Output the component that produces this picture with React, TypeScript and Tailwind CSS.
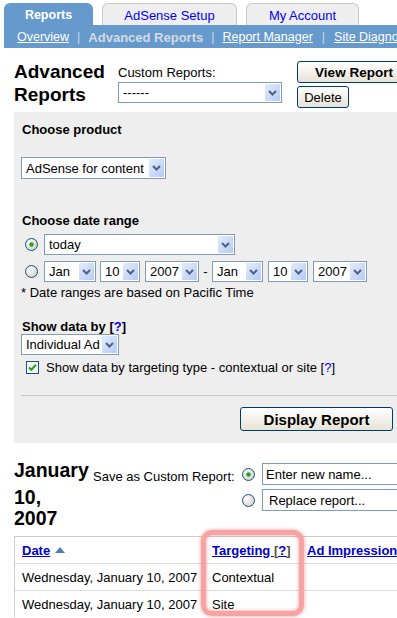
import React from 'react';

// Old AdSense "Advanced Reports" page
function Chevron() {
  return (
    <svg width="9" height="6" viewBox="0 0 9 6">
      <path d="M1 1 L4.5 4.5 L8 1" stroke="#4d6185" strokeWidth="2" fill="none" />
    </svg>
  );
}

function Select({ className, children }: { className: string; children?: React.ReactNode }) {
  return (
    <div className={`flex shrink-0 border border-[#7f9db9] bg-white ${className}`}>
      <span className="flex flex-1 items-center overflow-hidden whitespace-nowrap pl-[4px]">{children}</span>
      <span className="m-px flex w-[15px] items-center justify-center bg-gradient-to-br from-[#e4ecfd] to-[#b6caf6]">
        <Chevron />
      </span>
    </div>
  );
}

function Radio({ checked }: { checked?: boolean }) {
  return (
    <svg width="13" height="13" viewBox="0 0 13 13" className="shrink-0">
      <defs>
        <radialGradient id="radioFill" cx="35%" cy="35%" r="75%">
          <stop offset="0" stopColor="#ffffff" />
          <stop offset="1" stopColor="#cfcdc4" />
        </radialGradient>
      </defs>
      <circle cx="6.5" cy="6.5" r="6" fill="url(#radioFill)" stroke="#1c5180" strokeWidth="1" />
      {checked && <circle cx="6.5" cy="6.5" r="2.2" fill="#21a121" />}
    </svg>
  );
}

function Checkbox() {
  return (
    <svg width="13" height="13" viewBox="0 0 13 13" className="shrink-0">
      <rect x="0.5" y="0.5" width="12" height="12" fill="#f6f6f3" stroke="#1c5180" />
      <path d="M3 6.5 L5.3 8.8 L10 3.8" stroke="#21a121" strokeWidth="2" fill="none" />
    </svg>
  );
}

function Help({ bold }: { bold?: boolean }) {
  return (
    <span className={bold ? 'font-bold' : ''}>
      [<span className="text-[#0000ff]">?</span>]
    </span>
  );
}

export default function App() {
  const rows = [
    { date: 'Wednesday, January 10, 2007', targeting: 'Contextual' },
    { date: 'Wednesday, January 10, 2007', targeting: 'Site' },
  ];

  return (
    <div className="h-[618px] w-[397px] overflow-hidden bg-white font-['Liberation_Sans',Arial,sans-serif] text-[13px] leading-[15px] text-black">
      {/* tabs */}
      <div className="flex whitespace-nowrap pl-[4px] pt-[3px]">
        <div className="flex h-[22px] w-[89px] shrink-0 items-end justify-center rounded-t-[6px] bg-[#6699cc] pb-[2px] text-[12.5px] font-bold text-white">
          Reports
        </div>
        <div className="ml-[9px] flex h-[22px] w-[135px] shrink-0 items-end justify-center rounded-t-[6px] border border-b-0 border-[#c8c8c8] bg-[#eeeeee] pb-[2px] text-[#0000ff]">
          AdSense Setup
        </div>
        <div className="ml-[9px] flex h-[22px] w-[113px] shrink-0 items-end justify-center rounded-t-[6px] border border-b-0 border-[#c8c8c8] bg-[#eeeeee] pb-[2px] text-[#0000ff]">
          My Account
        </div>
      </div>
      <div className="ml-[4px] flex h-[23px] items-center whitespace-nowrap bg-[#6699cc] pl-[13px] pt-px text-[12.5px] text-white">
        <a className="shrink-0 underline">Overview</a>
        <span className="mx-[8px] shrink-0 text-[#c9d7e6]">|</span>
        <span className="shrink-0 text-[13px] font-bold text-[#d3dbe4]">Advanced Reports</span>
        <span className="mx-[8px] shrink-0 text-[#c9d7e6]">|</span>
        <a className="shrink-0 underline">Report Manager</a>
        <span className="mx-[9px] shrink-0 text-[#c9d7e6]">|</span>
        <a className="shrink-0 underline">Site Diagnostics</a>
      </div>

      {/* header */}
      <div className="flex h-[64px] whitespace-nowrap">
        <div className="ml-[14px] w-[104px] shrink-0 whitespace-normal pt-[12px] text-[19px] font-bold leading-[23px]">
          Advanced Reports
        </div>
        <div className="w-[179px] shrink-0 pt-[17px]">
          <div>Custom Reports:</div>
          <Select className="mt-[2px] h-[21px] w-[164px]">------</Select>
        </div>
        <div className="flex shrink-0 flex-col items-start gap-[3px] pt-[13px]">
          <button className="h-[22px] w-[114px] rounded-[3px] border border-[#003c74] bg-gradient-to-b from-white to-[#e6e3d6] text-[13.5px] font-bold">
            View Report
          </button>
          <button className="h-[22px] w-[52px] rounded-[3px] border border-[#003c74] bg-gradient-to-b from-white to-[#e6e3d6]">
            Delete
          </button>
        </div>
      </div>

      {/* options panel */}
      <div className="ml-[14px] flex h-[331px] flex-col bg-[#eeeeee] pl-[7px] pt-[10px] whitespace-nowrap">
        <div className="ml-px font-bold">Choose product</div>
        <Select className="mt-[20px] h-[22px] w-[145px]">AdSense for content</Select>

        <div className="ml-px mt-[34px] font-bold">Choose date range</div>
        <div className="mt-[6px] flex h-[21px] items-center">
          <span className="ml-[4px]"><Radio checked /></span>
          <Select className="ml-[6px] h-[21px] w-[191px]">today</Select>
        </div>
        <div className="mt-[6px] flex h-[21px] items-center">
          <span className="ml-[4px]"><Radio /></span>
          <Select className="ml-[6px] h-[21px] w-[52px]">Jan</Select>
          <Select className="ml-[4px] h-[21px] w-[40px]">10</Select>
          <Select className="ml-[5px] h-[21px] w-[54px]">2007</Select>
          <span className="w-[13px] shrink-0 text-center">-</span>
          <Select className="h-[21px] w-[51px]">Jan</Select>
          <Select className="ml-[5px] h-[21px] w-[40px]">10</Select>
          <Select className="ml-[5px] h-[21px] w-[54px]">2007</Select>
        </div>
        <div className="mt-[3px]">* Date ranges are based on Pacific Time</div>

        <div className="ml-px mt-[19px] font-bold">
          Show data by <Help bold />
        </div>
        <Select className="h-[21px] w-[98px]">Individual Ad</Select>
        <div className="mt-[5px] flex h-[15px] items-center">
          <span className="ml-[5px]"><Checkbox /></span>
          <span className="ml-[7px]">
            Show data by targeting type - contextual or site <Help />
          </span>
        </div>

        <div className="mt-[20px] border-t border-[#c8c8c8]" />
        <div className="mt-[11px] flex justify-end pr-[4px]">
          <button className="h-[24px] w-[153px] rounded-[3px] border border-[#003c74] bg-gradient-to-b from-white to-[#e6e3d6] text-[15px] font-bold">
            Display Report
          </button>
        </div>
      </div>

      {/* report heading */}
      <div className="flex whitespace-nowrap pl-[14px] pt-[16px]">
        <div className="w-[79px] shrink-0 text-[19.5px] font-bold">
          <span className="block leading-[22px]">January</span>
          <span className="mt-[6px] block leading-[21px]">10,</span>
          <span className="block leading-[21px]">2007</span>
        </div>
        <div className="w-[149px] shrink-0 pt-[10px]">Save as Custom Report:</div>
        <div className="flex shrink-0 flex-col gap-[4px] pt-[4px]">
          <div className="flex h-[22px] items-center">
            <Radio checked />
            <div className="ml-[7px] flex h-[22px] w-[200px] items-center border border-[#7f9db9] bg-white pl-[3px]">
              Enter new name...
            </div>
          </div>
          <div className="flex h-[22px] items-center">
            <Radio />
            <div className="ml-[7px] flex h-[22px] w-[200px] items-center border border-[#7f9db9] bg-white pl-[6px]">
              Replace report...
            </div>
          </div>
        </div>
      </div>

      {/* results table */}
      <div className="relative ml-[14px] mt-[7px] w-[500px] border-l border-t border-[#cccccc] whitespace-nowrap">
        <div className="grid h-[26px] grid-cols-[190px_95px_1fr] items-center font-bold text-[#0000cc]">
          <div className="flex items-center pl-[7px]">
            <a className="underline">Date</a>
            <svg width="10" height="6" viewBox="0 0 10 6" className="ml-[5px]">
              <path d="M0 6 L5 0 L10 6 Z" fill="#4c7fc0" />
            </svg>
          </div>
          <div className="pl-[7px]">
            <a className="underline">
              Targeting <span className="text-[#55553a]">[</span>?<span className="text-[#55553a]">]</span>
            </a>
          </div>
          <div className="pl-[7px]">
            <a className="underline">Ad Impressions</a>
          </div>
        </div>
        {rows.map((r, i) => (
          <div key={i} className="grid h-[27px] grid-cols-[190px_95px_1fr] items-center border-t border-[#dddddd]">
            <div className="pl-[7px]">{r.date}</div>
            <div className="pl-[7px]">{r.targeting}</div>
            <div />
          </div>
        ))}
        <div className="absolute left-[186px] top-[-7px] h-[86px] w-[103px] rounded-[11px] border-[5px] border-[#f5a3a3] shadow-[0_0_3px_1px_rgba(240,110,110,0.45),inset_0_0_3px_1px_rgba(240,110,110,0.45)]" />
      </div>
    </div>
  );
}
